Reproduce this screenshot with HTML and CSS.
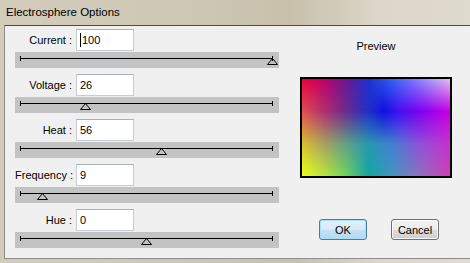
FILE: index.html
```html
<!DOCTYPE html>
<html lang="en">
<head>
<meta charset="utf-8"/>
<title>Electrosphere Options</title>
<link rel="stylesheet" href="styles.css">
</head>
<body>
<div class="window">
  <div class="titlebar">Electrosphere Options</div>
  <div class="client">
    <div class="controls">
      <div class="group">
        <div class="field"><span class="label">Current :</span><div class="box"><i class="caret"></i>100</div></div>
        <div class="slider"><div class="track"><svg class="thumb" style="left:100%" width="11" height="7"><polygon points="5.5,0.5 10.5,6.5 0.5,6.5"/></svg></div></div>
      </div>
      <div class="group">
        <div class="field"><span class="label">Voltage :</span><div class="box">26</div></div>
        <div class="slider"><div class="track"><svg class="thumb" style="left:26%" width="11" height="7"><polygon points="5.5,0.5 10.5,6.5 0.5,6.5"/></svg></div></div>
      </div>
      <div class="group">
        <div class="field"><span class="label">Heat :</span><div class="box">56</div></div>
        <div class="slider"><div class="track"><svg class="thumb" style="left:56%" width="11" height="7"><polygon points="5.5,0.5 10.5,6.5 0.5,6.5"/></svg></div></div>
      </div>
      <div class="group">
        <div class="field"><span class="label">Frequency :</span><div class="box">9</div></div>
        <div class="slider"><div class="track"><svg class="thumb" style="left:9%" width="11" height="7"><polygon points="5.5,0.5 10.5,6.5 0.5,6.5"/></svg></div></div>
      </div>
      <div class="group">
        <div class="field"><span class="label">Hue :</span><div class="box">0</div></div>
        <div class="slider"><div class="track"><svg class="thumb" style="left:50%" width="11" height="7"><polygon points="5.5,0.5 10.5,6.5 0.5,6.5"/></svg></div></div>
      </div>
    </div>

    <div class="side">
      <div class="preview-title">Preview</div>
      <div class="preview">
        <div class="band row4"></div>
        <div class="band row3"></div>
        <div class="band row2"></div>
        <div class="band row1"></div>
      </div>
      <div class="buttons">
        <button class="btn default">OK</button>
        <button class="btn">Cancel</button>
      </div>
    </div>
  </div>
</div>
</body>
</html>
```

FILE: styles.css
```css
body{margin:0;font-family:"Liberation Sans",Arial,sans-serif;font-size:11px;color:#000}
.window{width:470px;height:263px;background:linear-gradient(to right,#d3ccbb 0%,#cdc6b2 45%,#c8c0ab 62%,#dcd6c8 80%,#e0dbcf 100%);overflow:hidden}
.titlebar{height:25px;box-sizing:border-box;padding:6px 0 0 6px;font-size:11.5px;color:#000}
.client{margin-left:4px;height:232px;background:#f0f0f0;border-top:1px solid #4c4c4c;border-left:1px solid #8e8e8e;border-bottom:1px solid #8e8e8e;display:grid;grid-template-columns:281px 180px}

.controls{padding:3px 0 0 10px}
.group{margin-bottom:6px}
.field{display:flex;align-items:center;height:22px;margin-bottom:1px}
.label{width:57px;text-align:right;white-space:nowrap;margin-right:4px}
.box{width:56px;height:20px;line-height:20px;padding-left:3px;box-sizing:content-box;background:#fff;border:1px solid #c6ccd4;border-top-color:#abb1b9;display:flex;align-items:center}
.box{width:53px}
.caret{display:inline-block;width:1px;height:14px;background:#000;margin-right:1px}

.slider{width:264px;height:16px;background:#c3c3c3;padding-top:6px;box-sizing:border-box}
.track{position:relative;margin:0 6px 0 5px;border-top:1px solid #000;height:0}
.track::before,.track::after{content:"";position:absolute;top:-3px;width:1px;height:5px;background:#000}
.track::before{left:0}
.track::after{right:0}
.thumb{position:absolute;top:-1px;margin-left:-6px;display:block}
.thumb polygon{fill:none;stroke:#000;stroke-width:1}

.side{display:flex;flex-direction:column;align-items:center;padding-top:13px}
.preview-title{height:14px;line-height:14px;margin-bottom:24px}
.preview{position:relative;width:148px;height:97px;border:2px solid #000;overflow:hidden}
.band{position:absolute;inset:0}
.row4{background:linear-gradient(to right,#e8ff18 0%,#b8e840 15%,#70d060 30%,#10a8a0 45%,#4098c0 60%,#9070c0 80%,#d040b0 100%)}
.row3{background:linear-gradient(to right,#d8c030 0%,#a8a060 15%,#60a088 30%,#2898b0 45%,#4080d0 60%,#9050d8 80%,#c830d0 100%);
  -webkit-mask-image:linear-gradient(#000 66.7%,transparent 100%);mask-image:linear-gradient(#000 66.7%,transparent 100%)}
.row2{background:linear-gradient(to right,#e05050 0%,#b03070 15%,#6a2a90 30%,#2030c8 45%,#1010e0 55%,#4010f0 65%,#8000f0 80%,#c800e0 100%);
  -webkit-mask-image:linear-gradient(#000 33.3%,transparent 66.7%);mask-image:linear-gradient(#000 33.3%,transparent 66.7%)}
.row1{background:linear-gradient(to right,#e8003c 0%,#c0006a 15%,#6a1890 30%,#2030d0 45%,#3060f0 60%,#7878ff 75%,#e0c0f0 100%);
  -webkit-mask-image:linear-gradient(#000 0%,transparent 33.3%);mask-image:linear-gradient(#000 0%,transparent 33.3%)}

.buttons{display:flex;gap:24px;margin-top:41px;padding-left:6px}
.btn{width:48px;height:21px;padding:0;font-family:inherit;font-size:11px;color:#000;border:1px solid #707070;border-radius:3px;background:linear-gradient(#f2f2f2 0%,#ebebeb 50%,#dddddd 51%,#cfcfcf 100%);box-shadow:inset 0 0 0 1px rgba(255,255,255,.8)}
.btn.default{border-color:#3c7fb1;background:linear-gradient(#e3f1fb 0%,#d6eaf8 50%,#c6e0f3 51%,#b8d8ee 100%);box-shadow:inset 0 0 0 1px #a8e0f8}
```
